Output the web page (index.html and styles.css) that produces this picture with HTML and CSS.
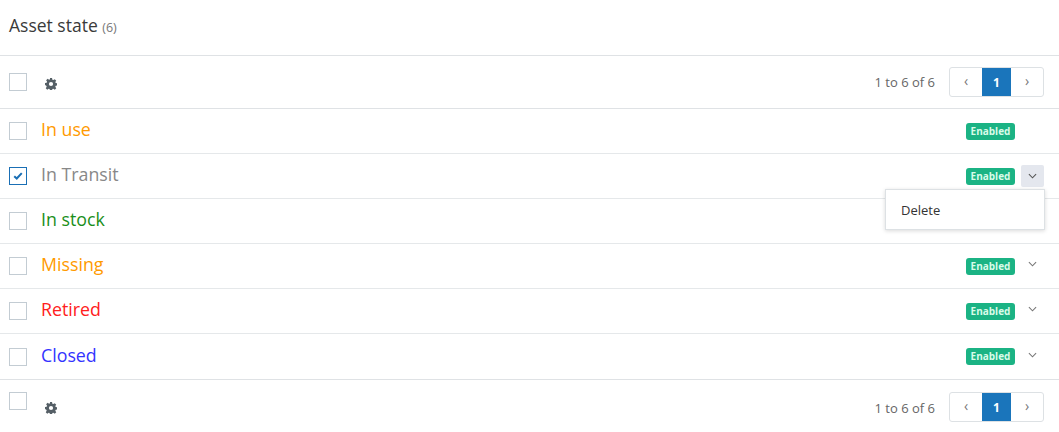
FILE: index.html
```html
<!DOCTYPE html>
<html lang="en">
<head>
  <meta charset="UTF-8">
  <title>Asset state</title>
  <link rel="stylesheet" href="styles.css">
</head>
<body>
  <div class="panel">
    <div class="panel-header">
      <h1>Asset state <span class="count">(6)</span></h1>
    </div>

    <div class="toolbar">
      <span class="check"></span>
      <svg class="gear" viewBox="0 0 16 16" width="12" height="12"><path d="M6.6 0h2.8l.4 2.2 1.3.6 1.9-1.3 2 2-1.3 1.9.6 1.3 2.2.4v2.8l-2.2.4-.6 1.3 1.3 1.9-2 2-1.9-1.3-1.3.6-.4 2.2H6.6l-.4-2.2-1.3-.6-1.9 1.3-2-2 1.3-1.9-.6-1.3L0 9.4V6.6l2.2-.4.6-1.3-1.3-1.9 2-2 1.9 1.3 1.3-.6zM8 5.2A2.8 2.8 0 1 0 8 10.8 2.8 2.8 0 1 0 8 5.2z" fill="#555f66" fill-rule="evenodd"/></svg>
      <span class="range">1 to 6 of 6</span>
      <div class="pager">
        <span class="page-btn">&#8249;</span>
        <span class="page-btn active">1</span>
        <span class="page-btn">&#8250;</span>
      </div>
    </div>

    <ul class="list">
      <li class="row">
        <span class="check"></span>
        <span class="name orange">In use</span>
        <span class="badge">Enabled</span>
        <span class="caret"></span>
      </li>
      <li class="row">
        <span class="check checked"><svg viewBox="0 0 12 12" width="10" height="10"><path d="M1.5 6.2l3 2.8 6-6.5" fill="none" stroke="#1a6fb5" stroke-width="2.4"/></svg></span>
        <span class="name gray">In Transit</span>
        <span class="badge">Enabled</span>
        <span class="caret open"><svg viewBox="0 0 10 6" width="9" height="6"><path d="M1 1l4 4 4-4" fill="none" stroke="#555" stroke-width="1.2"/></svg></span>
        <div class="menu">
          <span class="menu-item">Delete</span>
        </div>
      </li>
      <li class="row">
        <span class="check"></span>
        <span class="name green">In stock</span>
        <span class="badge">Enabled</span>
        <span class="caret"></span>
      </li>
      <li class="row">
        <span class="check"></span>
        <span class="name orange">Missing</span>
        <span class="badge">Enabled</span>
        <span class="caret"><svg viewBox="0 0 10 6" width="9" height="6"><path d="M1 1l4 4 4-4" fill="none" stroke="#777" stroke-width="1.2"/></svg></span>
      </li>
      <li class="row">
        <span class="check"></span>
        <span class="name red">Retired</span>
        <span class="badge">Enabled</span>
        <span class="caret"><svg viewBox="0 0 10 6" width="9" height="6"><path d="M1 1l4 4 4-4" fill="none" stroke="#777" stroke-width="1.2"/></svg></span>
      </li>
      <li class="row">
        <span class="check"></span>
        <span class="name blue">Closed</span>
        <span class="badge">Enabled</span>
        <span class="caret"><svg viewBox="0 0 10 6" width="9" height="6"><path d="M1 1l4 4 4-4" fill="none" stroke="#777" stroke-width="1.2"/></svg></span>
      </li>
    </ul>

    <div class="toolbar footer">
      <span class="check"></span>
      <svg class="gear" viewBox="0 0 16 16" width="12" height="12"><path d="M6.6 0h2.8l.4 2.2 1.3.6 1.9-1.3 2 2-1.3 1.9.6 1.3 2.2.4v2.8l-2.2.4-.6 1.3 1.3 1.9-2 2-1.9-1.3-1.3.6-.4 2.2H6.6l-.4-2.2-1.3-.6-1.9 1.3-2-2 1.3-1.9-.6-1.3L0 9.4V6.6l2.2-.4.6-1.3-1.3-1.9 2-2 1.9 1.3 1.3-.6zM8 5.2A2.8 2.8 0 1 0 8 10.8 2.8 2.8 0 1 0 8 5.2z" fill="#555f66" fill-rule="evenodd"/></svg>
      <span class="range">1 to 6 of 6</span>
      <div class="pager">
        <span class="page-btn">&#8249;</span>
        <span class="page-btn active">1</span>
        <span class="page-btn">&#8250;</span>
      </div>
    </div>
  </div>
</body>
</html>
```

FILE: styles.css
```css
body {
  font-family: "Open Sans", Arial, sans-serif;
  margin: 0;
  padding: 0;
  background: #fff;
  color: #333;
}

.panel {
  width: 1059px;
}

.panel-header {
  height: 56px;
  border-bottom: 1px solid #dfe2e5;
  display: flex;
  align-items: center;
  padding-left: 9px;
  box-sizing: border-box;
}

.panel-header h1 {
  margin: 0;
  font-size: 17.5px;
  font-weight: normal;
  color: #3a3a3a;
  position: relative;
  top: -3px;
}

.count {
  font-size: 12.5px;
  color: #777;
}

.toolbar {
  height: 52px;
  display: flex;
  align-items: center;
  padding: 0 15px 0 9px;
  border-bottom: 1px solid #dfe2e5;
}

.toolbar.footer {
  border-bottom: none;
  height: 52px;
  align-items: flex-start;
  padding-top: 12px;
  box-sizing: border-box;
}

.check {
  width: 16px;
  height: 16px;
  border: 1px solid #c3ccd3;
  background: #fff;
  display: inline-flex;
  align-items: center;
  justify-content: center;
  flex-shrink: 0;
}

.check.checked {
  border-color: #1a6fb5;
}

.gear {
  margin-left: 18px;
  margin-top: 3px;
}

.footer .gear {
  margin-top: 10px;
}

.range {
  margin-left: auto;
  font-size: 13px;
  color: #666;
  margin-right: 14px;
}

.footer .range {
  margin-top: 7px;
}

.pager {
  display: flex;
  border: 1px solid #dde1e4;
  border-radius: 3px;
  height: 28px;
  overflow: hidden;
}

.page-btn {
  width: 32px;
  display: flex;
  align-items: center;
  justify-content: center;
  font-size: 14px;
  color: #777;
  position: relative;
  top: -2px;
}

.page-btn.active {
  width: 29px;
  background: #1a75bb;
  color: #fff;
  font-weight: bold;
  font-size: 12px;
  top: 0;
}

.list {
  list-style: none;
  margin: 0;
  padding: 0;
}

.row {
  height: 44px;
  display: flex;
  align-items: center;
  padding: 0 15px 0 9px;
  border-bottom: 1px solid #e5e8ea;
  position: relative;
}

.row:last-child {
  height: 45px;
  border-bottom-color: #dfe2e5;
}

.name {
  margin-left: 14px;
  font-size: 17.8px;
  position: relative;
  top: -2px;
}

.orange { color: #ff9a00; }
.gray { color: #888; }
.green { color: #1a8f1a; }
.red { color: #ff2020; }
.blue { color: #3333ff; }

.badge {
  margin-left: auto;
  background: #1bb384;
  color: #d9fbe9;
  font-size: 10px;
  font-weight: bold;
  border-radius: 3px;
  padding: 0 4px;
  height: 17px;
  line-height: 17px;
  width: 41px;
  text-align: center;
}

.caret {
  width: 23px;
  height: 22px;
  margin-left: 6px;
  display: flex;
  align-items: center;
  justify-content: center;
  position: relative;
  top: -2px;
}

.caret.open {
  background: #e4e7ee;
  border-radius: 2px;
  top: 0;
}

.menu {
  position: absolute;
  right: 14px;
  top: 35px;
  width: 158px;
  background: #fff;
  border: 1px solid #dde1e4;
  box-shadow: 0 1px 4px rgba(0, 0, 0, 0.15);
  padding: 11px 0 10px;
  z-index: 5;
}

.menu-item {
  display: block;
  padding-left: 15px;
  font-size: 13px;
  color: #333;
}
```
